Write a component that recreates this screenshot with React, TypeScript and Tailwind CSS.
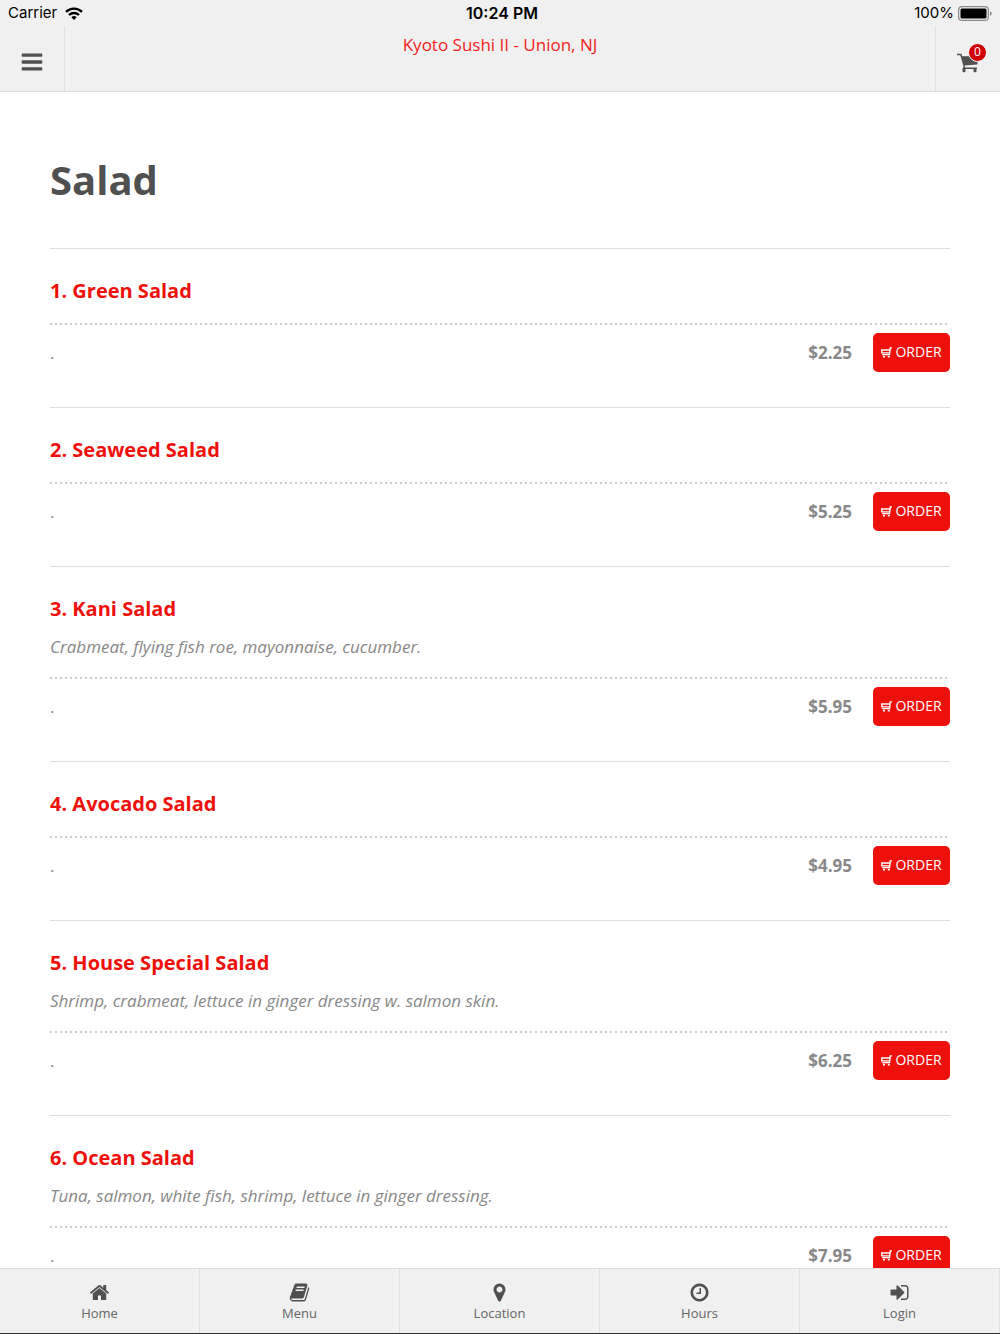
import React from "react";

interface IconProps {
  d: string;
  className?: string;
}

const Icon: React.FC<IconProps> = ({ d, className }) => (
  <svg viewBox="0 0 1792 1792" fill="currentColor" aria-hidden="true" className={className}>
    <path d={d} />
  </svg>
);

const icons = {
  bars: "M1664 1344v128q0 26-19 45t-45 19h-1408q-26 0-45-19t-19-45v-128q0-26 19-45t45-19h1408q26 0 45 19t19 45zm0-512v128q0 26-19 45t-45 19h-1408q-26 0-45-19t-19-45v-128q0-26 19-45t45-19h1408q26 0 45 19t19 45zm0-512v128q0 26-19 45t-45 19h-1408q-26 0-45-19t-19-45v-128q0-26 19-45t45-19h1408q26 0 45 19t19 45z",
  home: "M1472 992v480q0 26-19 45t-45 19h-384v-384h-256v384h-384q-26 0-45-19t-19-45v-480q0-1 .5-3t.5-3l575-474 575 474q1 2 1 6zm223-69l-62 74q-8 9-21 11h-3q-13 0-21-7l-692-577-692 577q-12 8-24 7-13-2-21-11l-62-74q-8-10-7-23.5t11-21.5l719-599q32-26 76-26t76 26l244 204v-195q0-14 9-23t23-9h192q14 0 23 9t9 23v408l219 182q10 8 11 21.5t-7 23.5z",
  book: "M1703 478q40 57 18 129l-275 906q-19 64-76.5 107.5t-122.5 43.5h-923q-77 0-148.5-53.5t-99.5-131.5q-24-67-2-127 0-4 3-27t4-37q1-8-3-21.5t-3-19.5q2-11 8-21t16.5-23.5 16.5-23.5q23-38 45-91.5t30-91.5q3-10 .5-30t-.5-28q3-11 17-28t17-23q21-36 42-92t25-90q1-9-2.5-32t.5-28q4-13 22-30.5t22-22.5q19-26 42.5-84.5t27.5-96.5q1-8-3-25.5t-2-26.5q2-8 9-18t18-23 17-21q8-12 16.5-30.5t15-35 16-36 19.5-32 26.5-23.5 36-11.5 47.5 5.5l-1 3q38-9 51-9h761q74 0 114 56t18 130l-274 906q-36 119-71.5 153.5t-128.5 34.5h-869q-27 0-38 15-11 16-1 43 24 70 144 70h923q29 0 56-15.5t35-41.5l300-987q7-22 5-57 38 15 59 43zm-1064 2q-4 13 2 22.5t20 9.5h608q13 0 25.5-9.5t16.5-22.5l21-64q4-13-2-22.5t-20-9.5h-608q-13 0-25.5 9.5t-16.5 22.5zm-83 256q-4 13 2 22.5t20 9.5h608q13 0 25.5-9.5t16.5-22.5l21-64q4-13-2-22.5t-20-9.5h-608q-13 0-25.5 9.5t-16.5 22.5z",
  marker: "M1152 640q0-106-75-181t-181-75-181 75-75 181 75 181 181 75 181-75 75-181zm256 0q0 109-33 179l-364 774q-16 33-47.5 52t-67.5 19-67.5-19-46.5-52l-365-774q-33-70-33-179 0-212 150-362t362-150 362 150 150 362z",
  clock: "M1024 544v448q0 14-9 23t-23 9h-320q-14 0-23-9t-9-23v-64q0-14 9-23t23-9h224v-352q0-14 9-23t23-9h64q14 0 23 9t9 23zm416 352q0-148-73-273t-198-198-273-73-273 73-198 198-73 273 73 273 198 198 273 73 273-73 198-198 73-273zm224 0q0 209-103 385.5t-279.5 279.5-385.5 103-385.5-103-279.5-279.5-103-385.5 103-385.5 279.5-279.5 385.5-103 385.5 103 279.5 279.5 103 385.5z",
  signIn: "M1312 896q0 26-19 45l-544 544q-19 19-45 19t-45-19-19-45v-288h-448q-26 0-45-19t-19-45v-384q0-26 19-45t45-19h448v-288q0-26 19-45t45-19 45 19l544 544q19 19 19 45zm352-352v704q0 119-84.5 203.5t-203.5 84.5h-320q-13 0-22.5-9.5t-9.5-22.5q0-4-1-20t-.5-26.5 3-23.5 10-19.5 20.5-6.5h320q66 0 113-47t47-113v-704q0-66-47-113t-113-47h-312l-11.5-1-11.5-3-8-5.5-7-9-2-13.5q0-4-1-20t-.5-26.5 3-23.5 10-19.5 20.5-6.5h320q119 0 203.5 84.5t84.5 203.5z",
};

interface Dish {
  name: string;
  description?: string;
  price: string;
}

const dishes: Dish[] = [
  { name: "1. Green Salad", price: "$2.25" },
  { name: "2. Seaweed Salad", price: "$5.25" },
  { name: "3. Kani Salad", description: "Crabmeat, flying fish roe, mayonnaise, cucumber.", price: "$5.95" },
  { name: "4. Avocado Salad", price: "$4.95" },
  { name: "5. House Special Salad", description: "Shrimp, crabmeat, lettuce in ginger dressing w. salmon skin.", price: "$6.25" },
  { name: "6. Ocean Salad", description: "Tuna, salmon, white fish, shrimp, lettuce in ginger dressing.", price: "$7.95" },
];

const tabs = [
  { label: "Home", icon: icons.home },
  { label: "Menu", icon: icons.book },
  { label: "Location", icon: icons.marker },
  { label: "Hours", icon: icons.clock },
  { label: "Login", icon: icons.signIn },
];

const StatusBar = () => (
  <div className="grid h-[26px] grid-cols-3 items-center px-2 font-[Inter,sans-serif] text-[15px] text-black">
    <div className="flex items-center gap-2">
      <span>Carrier</span>
      <svg viewBox="0 0 18 13" className="h-[13px] w-[18px]" fill="none" stroke="currentColor" strokeWidth="2.4" aria-hidden="true">
        <path d="M1 4.9a11.4 11.4 0 0 1 16 0" />
        <path d="M4 8a7.1 7.1 0 0 1 10 0" />
        <path d="M9 13 6.3 10.3a3.9 3.9 0 0 1 5.4 0z" fill="currentColor" stroke="none" />
      </svg>
    </div>
    <div className="pl-1 text-center text-base font-semibold">10:24 PM</div>
    <div className="flex items-center justify-end gap-1">
      <span>100%</span>
      <svg viewBox="0 0 34 15" className="h-[15px] w-[34px]" aria-hidden="true">
        <rect x=".6" y=".6" width="29.8" height="13.8" rx="3.5" fill="none" stroke="#8a8a8a" strokeWidth="1.2" />
        <rect x="2.5" y="2.5" width="26" height="10" rx="1.5" fill="#000" />
        <path d="M32 5.3q1.8.7 1.8 2.2T32 9.7z" fill="#8a8a8a" />
      </svg>
    </div>
  </div>
);

const Header = () => (
  <header className="shrink-0 border-b border-[#dfdfdf] bg-[#f0f0f0]">
    <StatusBar />
    <div className="flex h-[65px]">
      <button type="button" aria-label="Open menu" className="flex w-[65px] items-center justify-center border-r border-[#e0e0e0] pt-[6px]">
        <Icon d={icons.bars} className="size-6" />
      </button>
      <div className="flex-1 pt-[7px] text-center text-[17px] leading-6 text-[#f11d1d]">Kyoto Sushi II - Union, NJ</div>
      <button type="button" aria-label="Cart" className="flex w-[65px] items-center justify-center border-l border-[#e0e0e0] pt-2">
        <span className="relative">
          <svg viewBox="0 0 22 20" className="h-5 w-[22px]" fill="currentColor" aria-hidden="true">
            <path d="M0 .8h4.4l.9 2.4h15.7l-.6 8.2L7.6 12.6l.5 1.9H20v1.6H5.700L6.500 13.200 3.300 2.300H0z" />
            <rect x="5.500" y="15" width="3" height="4.200" rx="1" />
            <rect x="16.500" y="15" width="3" height="4.200" rx="1" />
          </svg>
          <span className="absolute -top-[10px] -right-2 flex size-[19px] items-center justify-center rounded-full border border-[#f7f7f7] bg-[#d00000] text-xs text-white">0</span>
        </span>
      </button>
    </div>
  </header>
);

const DishRow: React.FC<{ dish: Dish }> = ({ dish }) => (
  <li className="border-t border-[#dedede] pt-7 pb-[35px]">
    <h2 className="text-xl leading-7 font-bold text-[#ee100b]">{dish.name}</h2>
    {dish.description && <p className="mt-3 text-[17px] leading-6 text-[#888] italic">{dish.description}</p>}
    {/* Dotted divider */}
    <div className="mt-[18px] h-[2px] bg-[linear-gradient(to_right,#ccc_2px,transparent_2px)] bg-[length:5px_2px]" />
    <div className="flex items-center pt-2 text-[17px] text-[#888]">
      <span className="flex-1">.</span>
      <span className="mr-[21px] font-bold">{dish.price}</span>
      <button type="button" className="flex h-[39px] w-[77px] items-center justify-center gap-[3px] rounded-[5px] bg-[#ee100b] pb-px text-sm text-white">
        <svg viewBox="0 0 11 11" className="size-[11px]" fill="none" stroke="currentColor" strokeWidth="1.400" aria-hidden="true">
          <path d="M11 .9H9.300L8.500 7.600H1.200M8.800 3H.8v2.900h7.600" />
          <path d="M2 9.700h2M6.800 9.700h2" strokeWidth="1.800" />
        </svg>
        ORDER
      </button>
    </div>
  </li>
);

const TabBar = () => (
  <nav className="flex h-[66px] shrink-0 border-t border-b border-t-[#e2e2e2] border-b-[#333] bg-[#f0f0f0]">
    {tabs.map((tab) => (
      <a key={tab.label} href="#" className="flex flex-1 flex-col items-center border-r border-[#e0e0e0] pt-[13px]">
        <Icon d={tab.icon} className="size-[21px]" />
        <span className="text-[13px] leading-5 text-[#666]">{tab.label}</span>
      </a>
    ))}
  </nav>
);

export default function App() {
  return (
    <div className="flex h-screen flex-col bg-white font-['Open_Sans',sans-serif] text-[#505050]">
      <Header />
      <main className="min-h-0 flex-1 overflow-y-auto px-[50px] [scrollbar-width:none]">
        <h1 className="pt-16 pb-11 text-[40px] leading-[48px] font-bold">Salad</h1>
        <ul>
          {dishes.map((dish) => (
            <DishRow key={dish.name} dish={dish} />
          ))}
        </ul>
      </main>
      <TabBar />
    </div>
  );
}
